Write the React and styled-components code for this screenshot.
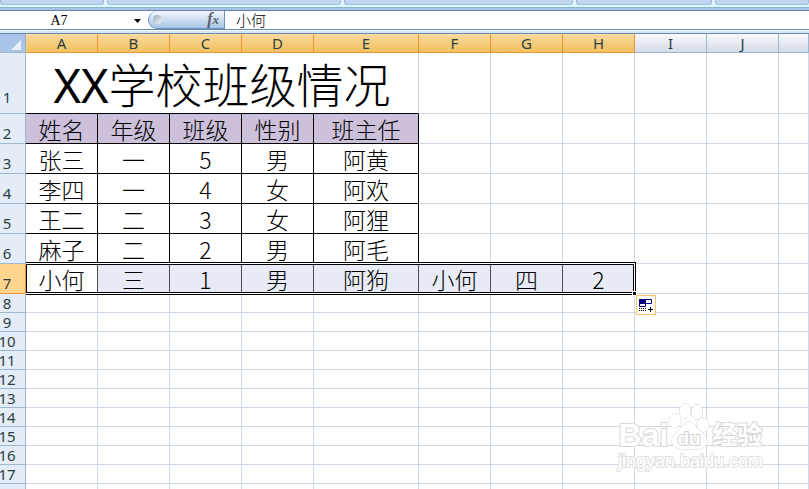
import React from 'react';
import styled, { createGlobalStyle } from 'styled-components';

const columns = [
  { name: 'A', width: 72 },
  { name: 'B', width: 72 },
  { name: 'C', width: 72 },
  { name: 'D', width: 72 },
  { name: 'E', width: 105 },
  { name: 'F', width: 72 },
  { name: 'G', width: 72 },
  { name: 'H', width: 72 },
  { name: 'I', width: 72 },
  { name: 'J', width: 72 },
  { name: '' },
];

const heading = ['姓名', '年级', '班级', '性别', '班主任'];

const students = [
  ['张三', '一', '5', '男', '阿黄'],
  ['李四', '一', '4', '女', '阿欢'],
  ['王二', '二', '3', '女', '阿狸'],
  ['麻子', '二', '2', '男', '阿毛'],
];

const selected = ['小何', '三', '1', '男', '阿狗', '小何', '四', '2'];

const emptyRows = [8, 9, 10, 11, 12, 13, 14, 15, 16, 17, 18];

const tableColumns = columns.slice(0, heading.length);
const restColumns = columns.slice(heading.length);
const selectionWidth = columns
  .slice(0, selected.length)
  .reduce((sum, column) => sum + column.width, 0);

const GlobalStyle = createGlobalStyle`
  * {
    box-sizing: border-box;
  }

  body {
    margin: 0;
    background: #fff;
    color: #000;
    font-family: 'Noto Sans CJK SC', sans-serif;
  }
`;

const Window = styled.div`
  display: flex;
  flex-direction: column;
  height: 100vh;
  overflow: hidden;
`;

const Ribbon = styled.div`
  display: flex;
  gap: 3px;
  height: 11px;
  padding-bottom: 6px;
  background: linear-gradient(
    #e3f1fb 5px,
    #d8fafd 5px 7px,
    #8fb2d2 7px 8px,
    #a9c3e4 8px 10px,
    #5f82ae 10px
  );
`;

const RibbonGroup = styled.div`
  flex: ${props => (props.$width ? `0 0 ${props.$width}px` : '1')};
  border: 1px solid #9dbfdf;
  border-top: 0;
  border-radius: 0 0 3px 3px;
  background: #c0d8ef;
`;

const FormulaBar = styled.div`
  display: flex;
  height: 23px;
  border-bottom: 1px solid #6a8cb5;
  background: linear-gradient(
    #fff 18px,
    #5b8aac 18px 19px,
    #fff 19px 20px,
    #d3e4f5 20px
  );
`;

const NameBox = styled.input`
  width: 118px;
  height: 18px;
  padding: 2px 0 0;
  border: 0;
  background: transparent;
  font: 14px/16px 'Liberation Serif', serif;
  text-align: center;
`;

const DropButton = styled.button`
  display: flex;
  align-items: center;
  justify-content: center;
  width: 30px;
  height: 19px;
  padding: 0 0 0 9px;
  border: 0;
  background: transparent;
`;

const FunctionArea = styled.div`
  display: flex;
  align-items: center;
  justify-content: space-between;
  width: 77px;
  height: 18px;
  padding: 0 5px 0 4px;
  border: 1px solid #6c93c0;
  border-top: 0;
  border-radius: 9px 0 0 9px;
  background: linear-gradient(#f2f7fd, #a9c4e6);
`;

const Knob = styled.span`
  width: 9px;
  height: 9px;
  border-radius: 50%;
  background: linear-gradient(135deg, #9aa5b5, #f5f7fa);
`;

const FunctionButton = styled.button`
  padding: 0;
  border: 0;
  background: transparent;
  color: #5a616b;
  font: italic bold 16px/16px 'Liberation Serif', serif;

  small {
    font-size: 13px;
  }
`;

const FormulaInput = styled.input`
  flex: 1;
  min-width: 0;
  height: 18px;
  padding: 0 11px;
  border: 0;
  background: transparent;
  font: 300 15px/18px 'Noto Sans CJK SC', sans-serif;
`;

const Sheet = styled.main`
  position: relative;
  flex: 1;
  min-height: 0;
  overflow: hidden;
`;

const Grid = styled.table`
  width: 100%;
  table-layout: fixed;
  border-collapse: separate;
  border-spacing: 0;
`;

const Row = styled.tr`
  height: ${props => props.$height}px;
`;

const Corner = styled.td`
  height: 19px;
  padding: 0 4px 2px;
  border-right: 1px solid #9eb6ce;
  border-bottom: 1px solid #9eb6ce;
  background: #a9c4e9;
  vertical-align: bottom;

  svg {
    display: block;
    margin-left: auto;
  }
`;

const ColumnHeader = styled.th`
  padding: 0;
  border-right: 1px solid ${props => (props.$active ? '#f29536' : '#9eb6ce')};
  border-bottom: 1px solid ${props => (props.$active ? '#f29536' : '#9eb6ce')};
  background: ${props =>
    props.$active
      ? 'linear-gradient(#f9d99f, #f1c15f)'
      : 'linear-gradient(#f9fafc, #d3dbe9)'};
  color: #2b3f3f;
  font: 15px/18px 'Noto Sans', sans-serif;
`;

const RowHeader = styled.th`
  position: relative;
  z-index: 2;
  padding: 0 11px ${props => props.$space || 0}px 0;
  border-right: 1px solid ${props => (props.$active ? '#f29536' : '#9eb6ce')};
  border-bottom: 1px solid ${props => (props.$active ? '#f29536' : '#9eb6ce')};
  background: ${props => (props.$active ? '#ffd58d' : '#e4ecf7')};
  color: #2b3f3f;
  font: 15px/18px 'Noto Sans', sans-serif;
  vertical-align: bottom;

  span {
    display: flex;
    justify-content: center;
  }
`;

const Cell = styled.td`
  padding: 0;
  border-right: 1px solid #d0d7e5;
  border-bottom: 1px solid #d0d7e5;
  font-size: 23px;
  font-weight: 300;
  text-align: center;
  white-space: nowrap;
`;

const TitleCell = styled(Cell)`
  padding-top: 4px;
  border-bottom-color: #000;
  font-family: 'Noto Sans', 'Noto Sans CJK SC', sans-serif;
  font-size: 47px;
  line-height: 56px;

  b {
    font-weight: 400;
  }
`;

const TextCell = styled(Cell)`
  padding-top: 2px;
  line-height: 27px;
`;

const TableCell = styled(TextCell)`
  border-color: #000;
`;

const HeadingCell = styled(TableCell)`
  background: #ccc0da;
`;

const SelectedCell = styled(TextCell)`
  position: relative;
  border-right-color: #4a4c52;
  background: ${props => (props.$active ? '#fff' : '#e8ebf5')};
`;

const Selection = styled.div`
  position: absolute;
  z-index: 1;
  top: -2px;
  left: -2px;
  width: ${props => props.$width + 3}px;
  height: 33px;
  border: 1px solid #000;
  box-shadow: inset 0 0 0 1px #fff, inset 0 0 0 2px #000;
  pointer-events: none;
`;

const FillHandle = styled.span`
  position: absolute;
  right: -2px;
  bottom: -2px;
  width: 5px;
  height: 5px;
  border: 1px solid #fff;
  background: #000;
`;

const FillOptions = styled.button`
  position: absolute;
  top: 100%;
  left: 100%;
  display: flex;
  align-items: center;
  justify-content: center;
  width: 20px;
  height: 20px;
  margin: 1px;
  padding: 0;
  border: 1px solid #ffbd69;
  background: #fff;
  pointer-events: auto;
`;

const SelectionAnchor = styled(SelectedCell)`
  z-index: 1;
`;

const Watermark = styled.div`
  position: absolute;
  right: 46px;
  bottom: 17px;
  z-index: 3;
  display: flex;
  flex-direction: column;
  align-items: center;
  color: #fff;
  font-family: 'Liberation Sans', 'Noto Sans CJK SC', sans-serif;
  pointer-events: none;
  paint-order: stroke fill;
  -webkit-text-stroke: 2px #d8d8d8;
`;

const Brand = styled.div`
  display: flex;
  align-items: flex-end;
  font-size: 32px;
  font-weight: 700;
  line-height: 30px;
`;

const BrandTail = styled.span`
  margin-left: 2px;
  font-size: 25px;
`;

const Paw = styled.svg`
  display: block;
  flex: none;
`;

const Site = styled.div`
  font-size: 18px;
  line-height: 22px;
  -webkit-text-stroke-color: #e2e2e2;
`;

const EmptyCells = ({ items }) =>
  items.map(column => <Cell key={column.name} />);

const NumberCell = ({ number, ...props }) => (
  <RowHeader scope="row" {...props}>
    <span>{number}</span>
  </RowHeader>
);

const App = () => (
  <Window>
    <GlobalStyle />
    <Ribbon>
      <RibbonGroup $width={104} />
      <RibbonGroup $width={234} />
      <RibbonGroup $width={229} />
      <RibbonGroup $width={136} />
      <RibbonGroup />
    </Ribbon>
    <FormulaBar>
      <NameBox aria-label="Name box" defaultValue="A7" />
      <DropButton aria-label="Names">
        <svg width="7" height="4" viewBox="0 0 7 4">
          <path d="M0 0h7L3.500 4z" fill="#000" />
        </svg>
      </DropButton>
      <FunctionArea>
        <Knob />
        <FunctionButton aria-label="Insert function">
          f<small>x</small>
        </FunctionButton>
      </FunctionArea>
      <FormulaInput aria-label="Formula" defaultValue="小何" />
    </FormulaBar>
    <Sheet>
      <Grid>
        <colgroup>
          <col style={{ width: 26 }} />
          {columns.map(column => (
            <col key={column.name} style={{ width: column.width }} />
          ))}
        </colgroup>
        <thead>
          <Row $height={19}>
            <Corner>
              <svg width="10" height="10" viewBox="0 0 10 10">
                <path d="M10 0v10H0z" fill="#e9f0fa" />
              </svg>
            </Corner>
            {columns.map((column, i) => (
              <ColumnHeader
                key={column.name}
                scope="col"
                $active={i < selected.length}
              >
                {column.name}
              </ColumnHeader>
            ))}
          </Row>
        </thead>
        <tbody>
          <Row $height={61}>
            <NumberCell number={1} $space={7} />
            <TitleCell colSpan={heading.length}>
              <b>XX</b>学校班级情况
            </TitleCell>
            <EmptyCells items={restColumns} />
          </Row>
          <Row $height={30}>
            <NumberCell number={2} $space={1} />
            {heading.map(text => (
              <HeadingCell key={text}>{text}</HeadingCell>
            ))}
            <EmptyCells items={restColumns} />
          </Row>
          {students.map((student, i) => (
            <Row key={student[0]} $height={30}>
              <NumberCell number={i + 3} $space={1} />
              {tableColumns.map((column, j) => (
                <TableCell key={column.name}>{student[j]}</TableCell>
              ))}
              <EmptyCells items={restColumns} />
            </Row>
          ))}
          <Row $height={30}>
            <NumberCell number={7} $space={1} $active />
            <SelectionAnchor $active>
              {selected[0]}
              <Selection $width={selectionWidth}>
                <FillHandle />
                <FillOptions aria-label="Auto fill options">
                  <svg width="16" height="16" viewBox="0 0 16 16">
                    <path
                      d="M7.500 2.500h6v4h-6zM1.500 6.500h6v3h-6z"
                      fill="#fff"
                      stroke="#000080"
                    />
                    <path d="M1 2h7v5H1z" fill="#000080" />
                    <path
                      d="M1 11.500h7M1 13.500h7"
                      stroke="#000"
                      strokeDasharray="1 1"
                    />
                    <path d="M10 12.500h5M12.500 10v5" stroke="#000" />
                  </svg>
                </FillOptions>
              </Selection>
            </SelectionAnchor>
            {selected.slice(1).map((text, i) => (
              <SelectedCell key={columns[i + 1].name}>{text}</SelectedCell>
            ))}
            <EmptyCells items={columns.slice(selected.length)} />
          </Row>
          {emptyRows.map(number => (
            <Row key={number} $height={19}>
              <NumberCell number={number} />
              <EmptyCells items={columns} />
            </Row>
          ))}
        </tbody>
      </Grid>
      <Watermark>
        <Brand>
          Bai
          <Paw width="42" height="48" viewBox="0 0 42 48">
            <g fill="#fff" stroke="#d0d0d0">
              <ellipse cx="7" cy="19" rx="6" ry="7" />
              <ellipse cx="17" cy="9" rx="5.500" ry="7.500" />
              <ellipse cx="29" cy="10" rx="5.500" ry="7.500" />
              <ellipse cx="35" cy="23" rx="6" ry="7" />
              <path d="M21 20c-5 0-7 5-10 8s-7 6-7 11 4 8 9 8h17c5 0 9-3 9-8s-4-8-8-11-5-8-10-8z" />
            </g>
            <text
              x="21"
              y="43"
              textAnchor="middle"
              fontSize="19"
              fill="#fff"
              stroke="#d2d2d2"
              strokeWidth="2"
            >
              du
            </text>
          </Paw>
          <BrandTail>经验</BrandTail>
        </Brand>
        <Site>jingyan.baidu.com</Site>
      </Watermark>
    </Sheet>
  </Window>
);

export default App;
